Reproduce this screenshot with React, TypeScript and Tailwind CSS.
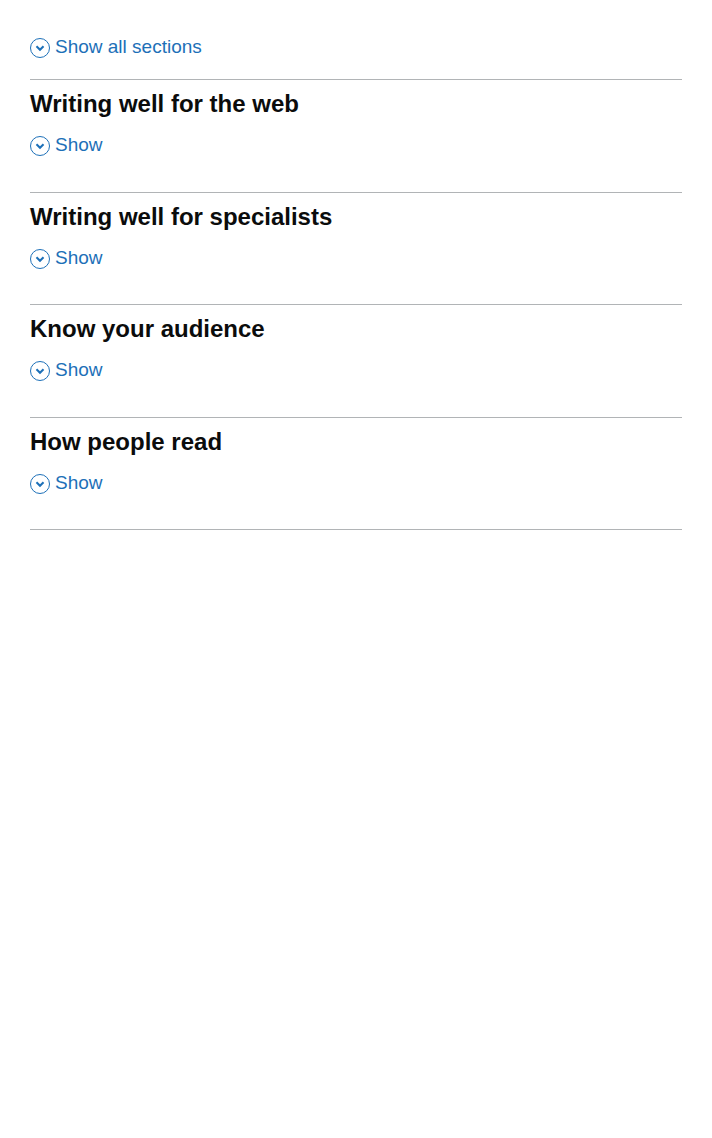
import { useState } from "react";

const titles = [
  "Writing well for the web",
  "Writing well for specialists",
  "Know your audience",
  "How people read",
];

function Chevron({ open }: { open: boolean }) {
  return (
    <svg
      className={open ? "size-5 shrink-0 rotate-180" : "size-5 shrink-0"}
      viewBox="0 0 20 20"
      aria-hidden="true"
    >
      <circle cx="10" cy="10" r="9.5" fill="none" stroke="currentColor" strokeWidth="1" />
      <path d="M5.76 9 7.17 7.5 10 10.2l2.83-2.7L14.24 9 10 13.24Z" fill="currentColor" />
    </svg>
  );
}

function Toggle({ open, label, onClick, name }: { open: boolean; label: string; onClick: () => void; name?: string }) {
  return (
    <button
      type="button"
      aria-expanded={open}
      aria-label={name}
      onClick={onClick}
      className="flex cursor-pointer items-center gap-[5px] text-[19px] leading-normal text-[#1d70b8]"
    >
      <Chevron open={open} />
      <span className="pb-px -mt-px">{label}</span>
    </button>
  );
}

export default function App() {
  const [open, setOpen] = useState<boolean[]>(titles.map(() => false));
  const all = open.every(Boolean);

  return (
    <main className="px-[30px] font-['Liberation_Sans',Arial,sans-serif] text-[#0b0c0c]">
      <div className="h-[79px] pt-[34px]">
        <Toggle
          open={all}
          label={all ? "Hide all sections" : "Show all sections"}
          onClick={() => setOpen(titles.map(() => !all))}
        />
      </div>
      <div className="border-b border-[#b1b4b6]">
        {titles.map((title, i) => (
          <section key={title} className="border-t border-[#b1b4b6] pt-[9px] pb-[31px]">
            <h2 className="mb-[13px] text-2xl leading-[30px] font-bold">{title}</h2>
            <Toggle
              open={open[i]}
              label={open[i] ? "Hide" : "Show"}
              name={`${open[i] ? "Hide" : "Show"} ${title}`}
              onClick={() => setOpen(open.map((value, j) => (j === i ? !value : value)))}
            />
          </section>
        ))}
      </div>
    </main>
  );
}
